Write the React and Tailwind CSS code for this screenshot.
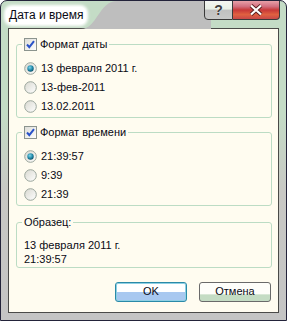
import React from "react";

const Radio = ({ checked }) => (
  <svg width="13" height="13" viewBox="0 0 13 13" className="shrink-0">
    <defs>
      <linearGradient id="rg" x1="0" y1="0" x2="1" y2="1">
        <stop offset="0" stopColor="#d8d8d0" />
        <stop offset="1" stopColor="#ffffff" />
      </linearGradient>
      <radialGradient id="dot" cx="0.4" cy="0.35" r="0.7">
        <stop offset="0" stopColor="#7fd4ea" />
        <stop offset="0.6" stopColor="#1f88a8" />
        <stop offset="1" stopColor="#0a4a60" />
      </radialGradient>
    </defs>
    <circle cx="6.5" cy="6.5" r="5.8" fill="url(#rg)" stroke="#9aa59c" strokeWidth="1" />
    {checked && <circle cx="6.5" cy="6.5" r="3.2" fill="url(#dot)" />}
  </svg>
);

const Check = () => (
  <svg width="13" height="13" viewBox="0 0 13 13" className="shrink-0">
    <defs>
      <linearGradient id="cg" x1="0" y1="0" x2="1" y2="1">
        <stop offset="0" stopColor="#dcdcd6" />
        <stop offset="1" stopColor="#ffffff" />
      </linearGradient>
    </defs>
    <rect x="0.5" y="0.5" width="12" height="12" fill="url(#cg)" stroke="#8c948e" />
    <path d="M3 6.5 L5.3 9.2 L10 3.2" fill="none" stroke="#2a52c8" strokeWidth="2" />
  </svg>
);

const RadioRow = ({ checked, label }) => (
  <div className="flex items-center gap-[4px] h-[19px] pl-[7px]">
    <Radio checked={checked} />
    <span>{label}</span>
  </div>
);

const Group = ({ legend, children, className }) => (
  <fieldset
    className={`border border-[#bcdcc4] rounded-[3px] px-[7px] ${className}`}
  >
    <legend className="px-[2px] -ml-[2px]">{legend}</legend>
    {children}
  </fieldset>
);

export default function App() {
  return (
    <div className="w-[287px] h-[321px] relative overflow-hidden rounded-t-[7px] border border-[#23233a] bg-[linear-gradient(to_bottom,#c4dcc6_0%,#c4dcc6_35%,#c8c8c4_60%,#c4c4c4_100%)] font-['Liberation_Sans',Arial,sans-serif] text-[11px] text-[#0a0a14] flex flex-col">
      <svg className="absolute left-0 top-0" width="287" height="28" viewBox="0 0 287 28">
        <path d="M80 28 C96 28 98 0 116 0 L210 0 L210 28 Z" fill="#bebebe" />
      </svg>
      <div className="h-[27px] relative flex items-start justify-between pl-[5px]">
        <span className="mt-[6px] px-[3px] h-[17px] leading-[17px] text-[12px] bg-white rounded-[6px] shadow-[0_0_3px_2px_#ffffff]">
          Дата и время
        </span>
        <div className="flex mr-[6px] -mt-[1px]">
          <div className="w-[29px] h-[20px] border border-[#3a3a3a] rounded-bl-[4px] bg-[linear-gradient(to_bottom,#f4f6f2_0%,#e8f0e6_45%,#c0c0c0_50%,#c8c8c8_100%)] flex items-center justify-center text-[14px] font-bold text-[#404040] [text-shadow:0_0_1px_white]">
            ?
          </div>
          <div className="w-[47px] h-[20px] border border-l-0 border-[#3a3a3a] rounded-br-[4px] bg-[linear-gradient(to_bottom,#e8a0a8_0%,#d27080_30%,#c83838_50%,#e06040_75%,#c84848_100%)] flex items-center justify-center">
            <svg width="14" height="12" viewBox="0 0 14 12">
              <path d="M2 1.5 L12 10.5 M12 1.5 L2 10.5" stroke="#5a2020" strokeWidth="4" />
              <path d="M2 1.5 L12 10.5 M12 1.5 L2 10.5" stroke="#ffffff" strokeWidth="2.2" />
            </svg>
          </div>
        </div>
      </div>
      <div className="mx-[7px] h-[285px] border border-[#4a4a48] bg-[#fffcf0] pl-[7px] pr-[6px] flex flex-col">
        <Group
          className="mt-[8px] pb-[1px]"
          legend={
            <span className="flex items-center gap-[3px] h-[14px]">
              <Check />
              <span>Формат даты</span>
            </span>
          }
        >
          <div className="pt-[8px] -mx-[7px]">
            <RadioRow checked label="13 февраля 2011 г." />
            <RadioRow label="13-фев-2011" />
            <RadioRow label="13.02.2011" />
          </div>
        </Group>
        <Group
          className="mt-[7px] pb-[1px]"
          legend={
            <span className="flex items-center gap-[3px] h-[14px]">
              <Check />
              <span>Формат времени</span>
            </span>
          }
        >
          <div className="pt-[8px] -mx-[7px]">
            <RadioRow checked label="21:39:57" />
            <RadioRow label="9:39" />
            <RadioRow label="21:39" />
          </div>
        </Group>
        <Group className="mt-[8px] pb-[1px]" legend={<span className="leading-[13px]">Образец:</span>}>
          <div className="pt-[7px] leading-[14px]">
            <div>13 февраля 2011 г.</div>
            <div>21:39:57</div>
          </div>
        </Group>
        <div className="flex justify-end gap-[12px] mt-[14px] mr-[1px]">
          <button className="w-[72px] h-[20px] rounded-[3px] border border-[#2a8aa8] shadow-[inset_0_0_0_1px_#8fd0e4] bg-[linear-gradient(to_bottom,#ffffff_0%,#ffffff_48%,#a8c8f0_52%,#a8c8f0_100%)] text-[11px]">
            OK
          </button>
          <button className="w-[72px] h-[20px] rounded-[3px] border border-[#6a6a6a] bg-[linear-gradient(to_bottom,#fefefa_0%,#fefefa_60%,#c4dcc4_66%,#c4dcc4_100%)] text-[11px]">
            Отмена
          </button>
        </div>
      </div>
    </div>
  );
}
